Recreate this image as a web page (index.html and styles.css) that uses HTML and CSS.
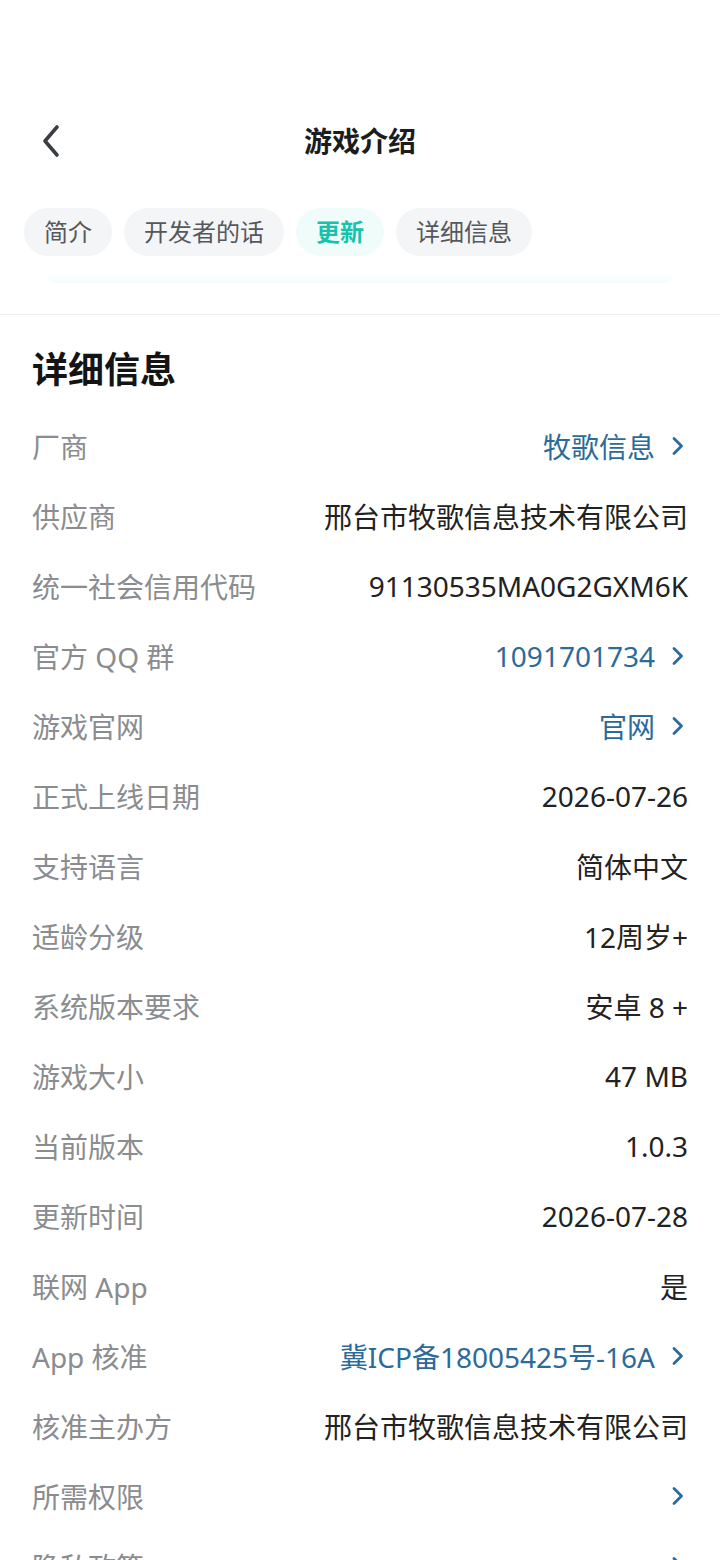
FILE: index.html
```html
<!DOCTYPE html>
<html lang="zh-CN">
<head>
<meta charset="utf-8">
<title>游戏介绍</title>
<link rel="stylesheet" href="styles.css">
</head>
<body>
<div class="page">
  <div class="status"></div>
  <header class="nav">
    <svg class="back" width="24" height="34" viewBox="0 0 24 34"><path d="M17 3 L5 17 L17 31" fill="none" stroke="#3a3d42" stroke-width="3.6" stroke-linecap="round" stroke-linejoin="round"/></svg>
    <h1 class="title">游戏介绍</h1>
  </header>
  <nav class="tabs">
    <span class="tab">简介</span>
    <span class="tab">开发者的话</span>
    <span class="tab active">更新</span>
    <span class="tab">详细信息</span>
  </nav>
  <div class="peek"></div>
  <div class="divider"></div>
  <section class="details">
    <h2 class="heading">详细信息</h2>
    <div class="row"><span class="label">厂商</span><span class="value link">牧歌信息<svg class="chev" width="24" height="24" viewBox="0 0 24 24"><path d="M9 4.5 L16.5 12 L9 19.5" fill="none" stroke="currentColor" stroke-width="2.8" stroke-linecap="round" stroke-linejoin="round"/></svg></span></div>
    <div class="row"><span class="label">供应商</span><span class="value">邢台市牧歌信息技术有限公司</span></div>
    <div class="row"><span class="label">统一社会信用代码</span><span class="value">91130535MA0G2GXM6K</span></div>
    <div class="row"><span class="label">官方 QQ 群</span><span class="value link">1091701734<svg class="chev" width="24" height="24" viewBox="0 0 24 24"><path d="M9 4.5 L16.5 12 L9 19.5" fill="none" stroke="currentColor" stroke-width="2.8" stroke-linecap="round" stroke-linejoin="round"/></svg></span></div>
    <div class="row"><span class="label">游戏官网</span><span class="value link">官网<svg class="chev" width="24" height="24" viewBox="0 0 24 24"><path d="M9 4.5 L16.5 12 L9 19.5" fill="none" stroke="currentColor" stroke-width="2.8" stroke-linecap="round" stroke-linejoin="round"/></svg></span></div>
    <div class="row"><span class="label">正式上线日期</span><span class="value">2026-07-26</span></div>
    <div class="row"><span class="label">支持语言</span><span class="value">简体中文</span></div>
    <div class="row"><span class="label">适龄分级</span><span class="value">12周岁+</span></div>
    <div class="row"><span class="label">系统版本要求</span><span class="value">安卓 8 +</span></div>
    <div class="row"><span class="label">游戏大小</span><span class="value">47 MB</span></div>
    <div class="row"><span class="label">当前版本</span><span class="value">1.0.3</span></div>
    <div class="row"><span class="label">更新时间</span><span class="value">2026-07-28</span></div>
    <div class="row"><span class="label">联网 App</span><span class="value">是</span></div>
    <div class="row"><span class="label">App 核准</span><span class="value link">冀ICP备18005425号-16A<svg class="chev" width="24" height="24" viewBox="0 0 24 24"><path d="M9 4.5 L16.5 12 L9 19.5" fill="none" stroke="currentColor" stroke-width="2.8" stroke-linecap="round" stroke-linejoin="round"/></svg></span></div>
    <div class="row"><span class="label">核准主办方</span><span class="value">邢台市牧歌信息技术有限公司</span></div>
    <div class="row"><span class="label">所需权限</span><span class="value link"><svg class="chev" width="24" height="24" viewBox="0 0 24 24"><path d="M9 4.5 L16.5 12 L9 19.5" fill="none" stroke="currentColor" stroke-width="2.8" stroke-linecap="round" stroke-linejoin="round"/></svg></span></div>
    <div class="row"><span class="label">隐私政策</span><span class="value link"><svg class="chev" width="24" height="24" viewBox="0 0 24 24"><path d="M9 4.5 L16.5 12 L9 19.5" fill="none" stroke="currentColor" stroke-width="2.8" stroke-linecap="round" stroke-linejoin="round"/></svg></span></div>
  </section>
</div>
</body>
</html>
```
FILE: styles.css
```css
html, body {
  margin: 0;
  padding: 0;
  background: #ffffff;
}
body {
  font-family: "Noto Sans", "Noto Sans CJK SC", sans-serif;
  color: #222222;
  overflow: hidden;
  height: 1560px;
}
.page {
  width: 720px;
  height: 1560px;
  overflow: hidden;
}
.status {
  height: 100px;
}
.nav {
  height: 82px;
  display: flex;
  align-items: center;
  justify-content: center;
  position: relative;
}
.back {
  position: absolute;
  left: 40px;
  top: 24px;
}
.title {
  margin: 0;
  font-size: 28px;
  font-weight: 700;
  color: #1c1c1c;
  line-height: 40px;
}
.tabs {
  margin-top: 26px;
  display: flex;
  gap: 12px;
  padding: 0 24px;
}
.tab {
  height: 48px;
  line-height: 48px;
  padding: 0 20px;
  border-radius: 24px;
  background: #f4f5f7;
  color: #55585d;
  font-size: 24px;
}
.tab.active {
  background: #effcfa;
  color: #17c3ad;
  font-weight: 700;
}
.peek {
  height: 10px;
  margin: 17px 46px 0;
  border-radius: 0 0 14px 14px;
  background: linear-gradient(to bottom, #ffffff, #f1fbfa);
}
.divider {
  margin-top: 31px;
  height: 1px;
  background: #ededed;
}
.details {
  padding: 30px 32px 0 32px;
}
.heading {
  margin: 0 0 16px;
  font-size: 36px;
  line-height: 50px;
  font-weight: 700;
  color: #141414;
}
.row {
  height: 70px;
  display: flex;
  align-items: center;
  justify-content: space-between;
  font-size: 28px;
}
.label {
  color: #8a8c8f;
}
.value {
  color: #222222;
  display: flex;
  align-items: center;
}
.value.link {
  color: #2c6a9a;
}
.chev {
  margin-left: 10px;
  margin-right: -1px;
}
```
